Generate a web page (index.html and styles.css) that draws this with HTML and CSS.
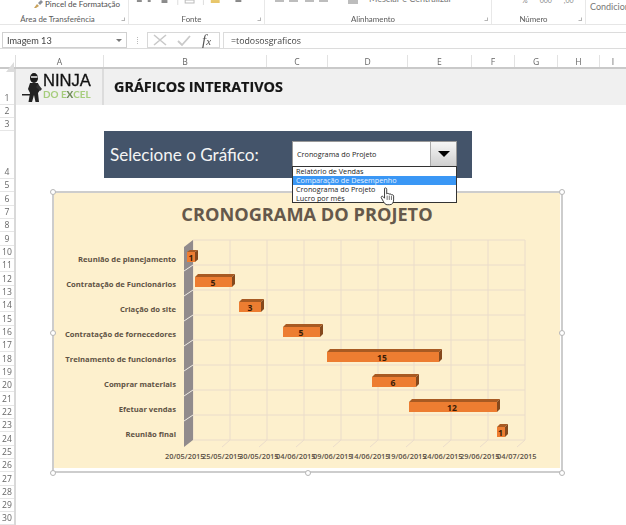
FILE: index.html
```html
<!DOCTYPE html>
<html lang="pt">
<head>
<meta charset="utf-8">
<title>Gráficos Interativos</title>
<link rel="stylesheet" href="styles.css">
</head>
<body>
<div class="app">
  <header class="ribbon">
    <section class="group g1">
      <div class="tools tools-clip">
        <svg class="brush" width="11" height="10" viewBox="0 0 11 10"><path d="M1 9 L4 5 L6 7 L3 9 Z" fill="#c9a25a"/><path d="M5 4 L8 1 L10 3 L7 6 Z" fill="#8a8f98"/></svg>
        <span class="tool-text">Pincel de Formatação</span>
      </div>
      <div class="glabel"><span>Área de Transferência</span><i class="launch"></i></div>
    </section>
    <section class="group g2">
      <div class="tools">
        <svg width="137" height="6" viewBox="0 0 137 6"><g fill="#8b8b8b"><rect x="8" y="0" width="5" height="2"/><rect x="19" y="0" width="3" height="2"/><rect x="33" y="0" width="6" height="3"/></g><rect x="57" y="0" width="9" height="3" fill="none" stroke="#bbb"/><rect x="83" y="0" width="9" height="3" fill="#e8c66a"/><rect x="108" y="0" width="6" height="2" fill="#888"/><rect x="49" y="0" width="1" height="5" fill="#ddd"/><rect x="75" y="0" width="1" height="5" fill="#ddd"/></svg>
      </div>
      <div class="glabel"><span>Fonte</span><i class="launch"></i></div>
    </section>
    <section class="group g3">
      <div class="tools tools-up">
        <svg width="100" height="6" viewBox="0 0 100 6"><g fill="#bdbdbd"><rect x="10" y="0" width="9" height="2"/><rect x="24" y="0" width="9" height="2"/><rect x="40" y="0" width="9" height="2"/><rect x="54" y="0" width="9" height="2"/><rect x="83" y="0" width="10" height="4"/></g></svg>
        <span class="tool-text cut">Mesclar e Centralizar</span>
      </div>
      <div class="glabel"><span>Alinhamento</span><i class="launch"></i></div>
    </section>
    <section class="group g4">
      <div class="tools tools-num"><span class="tool-text">%</span><span class="tool-text">000</span><span class="tool-text">,00</span><span class="tool-text">,0</span></div>
      <div class="glabel"><span>Número</span><i class="launch"></i></div>
    </section>
    <section class="group g5"><span class="cond">Condicion</span></section>
  </header>

  <div class="formula">
    <div class="namebox"><span>Imagem 13</span><i class="caret"></i></div>
    <div class="dots"></div>
    <div class="fxbox">
      <svg width="16" height="14" viewBox="0 0 16 14"><path d="M2 2 L14 12 M14 2 L2 12" stroke="#c9c9c9" stroke-width="1.6" fill="none"/></svg>
      <svg width="16" height="14" viewBox="0 0 16 14"><path d="M2 8 L6 12 L14 3" stroke="#c9c9c9" stroke-width="1.8" fill="none"/></svg>
      <span class="fx">f<sub>x</sub></span>
    </div>
    <div class="input">=todososgraficos</div>
  </div>

  <div class="colhead">
    <div class="corner"><svg width="8" height="10" viewBox="0 0 8 10"><path d="M8 0 V10 H0 Z" fill="#dcdcdc"/></svg></div>
    <div class="col a">A</div><div class="col b">B</div><div class="col c">C</div><div class="col d">D</div><div class="col e">E</div><div class="col f">F</div><div class="col g">G</div><div class="col h">H</div><div class="col i">I</div>
  </div>

  <div class="sheet">
    <div class="rows">
      <div class="row r1">1</div><div class="row">2</div><div class="row">3</div><div class="row r4">4</div>
      <div class="row">5</div><div class="row">6</div><div class="row">7</div><div class="row">8</div><div class="row">9</div><div class="row">10</div>
      <div class="row">11</div><div class="row">12</div><div class="row">13</div><div class="row">14</div><div class="row">15</div><div class="row">16</div>
      <div class="row">17</div><div class="row">18</div><div class="row">19</div><div class="row">20</div><div class="row">21</div><div class="row">22</div>
      <div class="row">23</div><div class="row">24</div><div class="row">25</div><div class="row">26</div><div class="row">27</div><div class="row">28</div>
      <div class="row">29</div><div class="row">30</div>
    </div>
    <div class="cells">
      <div class="headband">
        <div class="logo-cell">
          <svg class="ninja" width="22" height="33" viewBox="0 0 22 33">
            <path d="M0 24 H9 V25.500 H0 Z" fill="#222"/>
            <ellipse cx="12" cy="8" rx="4" ry="5" fill="#1c1c1c"/>
            <rect x="9" y="6" width="6.500" height="2" fill="#bdbdbd"/>
            <path d="M8 13 H16 L18 20 L16 23 L17 32 H13.500 L12 25 L10 32 H6.500 L8 23 L6 19 Z" fill="#222"/>
            <path d="M16 14 L20 19 L18 21 L14 17 Z" fill="#333"/>
          </svg>
          <div class="wordmark">
            <span class="w-ninja">NINJA</span>
            <span class="w-excel">DO E<b>X</b>CEL</span>
          </div>
        </div>
        <div class="title-cell">GRÁFICOS INTERATIVOS</div>
      </div>

      <svg class="chart" width="524" height="294" viewBox="46 185 524 294">
        <rect x="53" y="192" width="509" height="280" fill="#fff" stroke="#bdbdbd" stroke-width="1.5"/>
        <rect x="54" y="193" width="506" height="275" fill="#fdf0cd"/>
        <text class="c-title" x="307" y="221" text-anchor="middle">CRONOGRAMA DO PROJETO</text>

        <g class="grid">
          <path d="M193 240H525M193 265H525M193 290H525M193 315H525M193 340H525M193 365H525M193 390H525M193 415H525M193 440H525"/>
          <path d="M193 240V440M230 240V440M267 240V440M304 240V440M341 240V440M378 240V440M414 240V440M451 240V440M488 240V440M525 240V440"/>
          <path d="M230 440l-8 7M267 440l-8 7M304 440l-8 7M341 440l-8 7M378 440l-8 7M414 440l-8 7M451 440l-8 7M488 440l-8 7M525 440l-8 7"/>
        </g>
        <path d="M184 247 L193 240 V440 L184 447 Z" fill="#918b8c"/>
        <path class="wall" d="M184 271l9-6M184 296l9-6M184 321l9-6M184 346l9-6M184 371l9-6M184 396l9-6M184 421l9-6"/>

        <g class="cats" text-anchor="end">
          <text x="176" y="262.300">Reunião de planejamento</text>
          <text x="176" y="287.300">Contratação de Funcionários</text>
          <text x="176" y="312.300">Criação do site</text>
          <text x="176" y="337.300">Contratação de fornecedores</text>
          <text x="176" y="362.300">Treinamento de funcionários</text>
          <text x="176" y="387.300">Comprar materiais</text>
          <text x="176" y="412.300">Efetuar vendas</text>
          <text x="176" y="437.300">Reunião final</text>
        </g>

        <g class="dates">
          <text x="165" y="458.500">20/05/2015</text>
          <text x="202" y="458.500">25/05/2015</text>
          <text x="239" y="458.500">30/05/2015</text>
          <text x="276" y="458.500">04/06/2015</text>
          <text x="313" y="458.500">09/06/2015</text>
          <text x="350" y="458.500">14/06/2015</text>
          <text x="387" y="458.500">19/06/2015</text>
          <text x="423" y="458.500">24/06/2015</text>
          <text x="460" y="458.500">29/06/2015</text>
          <text x="497" y="458.500">04/07/2015</text>
        </g>

        <g class="bars">
          <g><path class="top" d="M187 252 l3 -2 h8 l-3 2Z"/><path class="side" d="M195 252 l3 -2 v9.500 l-3 2.500Z"/><rect class="front" x="187" y="252" width="8" height="10"/><text x="191" y="260.500">1</text></g>
          <g><path class="top" d="M195 277 l3 -3 h37 l-3 3Z"/><path class="side" d="M232 277 l3 -3 v10 l-3 3Z"/><rect class="front" x="195" y="277" width="37" height="10"/><text x="213" y="285.500">5</text></g>
          <g><path class="top" d="M239 302 l3 -3 h22 l-3 3Z"/><path class="side" d="M261 302 l3 -3 v10 l-3 3Z"/><rect class="front" x="239" y="302" width="22" height="10"/><text x="250" y="310.500">3</text></g>
          <g><path class="top" d="M283 327 l3 -3 h37 l-3 3Z"/><path class="side" d="M320 327 l3 -3 v10 l-3 3Z"/><rect class="front" x="283" y="327" width="37" height="10"/><text x="301" y="335.500">5</text></g>
          <g><path class="top" d="M327 352 l3 -3 h112 l-3 3Z"/><path class="side" d="M439 352 l3 -3 v10 l-3 3Z"/><rect class="front" x="327" y="352" width="112" height="10"/><text x="382" y="360.500">15</text></g>
          <g><path class="top" d="M372 377 l3 -3 h44 l-3 3Z"/><path class="side" d="M416 377 l3 -3 v10 l-3 3Z"/><rect class="front" x="372" y="377" width="44" height="10"/><text x="393" y="385.500">6</text></g>
          <g><path class="top" d="M409 402 l3 -3 h88 l-3 3Z"/><path class="side" d="M497 402 l3 -3 v10 l-3 3Z"/><rect class="front" x="409" y="402" width="88" height="10"/><text x="452" y="410.500">12</text></g>
          <g><path class="top" d="M497 427 l3 -3 h8 l-3 3Z"/><path class="side" d="M505 427 l3 -3 v10 l-3 3Z"/><rect class="front" x="497" y="427" width="8" height="10"/><text x="500.500" y="435.500">1</text></g>
        </g>

        <g class="handles">
          <circle cx="53" cy="192" r="2.500"/><circle cx="308" cy="192" r="2.500"/><circle cx="562" cy="192" r="2.500"/>
          <circle cx="53" cy="333" r="2.500"/><circle cx="562" cy="333" r="2.500"/>
          <circle cx="53" cy="473" r="2.500"/><circle cx="308" cy="473" r="2.500"/><circle cx="562" cy="473" r="2.500"/>
        </g>
      </svg>

      <div class="banner">
        <span class="banner-text">Selecione o Gráfico:</span>
      </div>
      <div class="combo">
        <div class="combo-head">
          <span>Cronograma do Projeto</span>
          <span class="combo-btn"><i class="tri"></i></span>
        </div>
        <ul class="combo-list">
          <li>Relatório de Vendas</li>
          <li class="sel">Comparação de Desempenho</li>
          <li>Cronograma do Projeto</li>
          <li>Lucro por mês</li>
        </ul>
      </div>
      <svg class="cursor" width="16" height="19" viewBox="0 0 18 22">
        <path d="M5 1.500 C6.200 0.500 7.500 1.200 7.500 2.500 V8 C8.500 7 9.800 7.200 10.200 8.400 C11.200 7.600 12.500 8 12.800 9.200 C13.800 8.600 15.400 9 15.500 10.600 V15 C15.500 18 14 20.500 11 20.500 H8 C6 20.500 5 19 3.800 17 L1.200 12.500 C0.600 11 2.400 10 3.400 11.200 L5 13 Z" fill="#fff" stroke="#222" stroke-width="1"/>
        <path d="M8 10 V15 M10.500 10 V15 M13 10.500 V15" stroke="#333" stroke-width=".8"/>
      </svg>
    </div>
  </div>
</div>
</body>
</html>
```
FILE: styles.css
```css
* { box-sizing: border-box; margin: 0; padding: 0; }
html, body { width: 626px; height: 525px; overflow: hidden; background: #fff; }
body { font-family: "Open Sans", "Noto Sans", sans-serif; color: #555; }
.app { width: 626px; height: 525px; display: flex; flex-direction: column; overflow: hidden; filter: blur(.3px); }

/* ribbon */
.ribbon { height: 25px; display: flex; border-bottom: 1px solid #e6e6e6; background: #fff; flex: none; font-family: Lato, sans-serif; }
.group { display: flex; flex-direction: column; justify-content: space-between; border-right: 1px solid #e8e8e8; height: 24px; overflow: hidden; }
.g1 { width: 129px; }
.g2 { width: 136px; }
.g3 { width: 227px; }
.g4 { width: 94px; }
.g5 { flex: 1; border-right: 0; padding: 1px 0 0 4px; }
.tools { height: 9px; display: flex; align-items: flex-start; overflow: hidden; }
.tools-clip { padding-left: 33px; gap: 1px; }
.tool-text { font-size: 8px; line-height: 8px; color: #4e4e4e; white-space: nowrap; }
.brush { flex: none; margin-top: -1px; }
.tool-text.cut { margin: -5px 0 0 4px; font-size: 9px; color: #777; }
.tools-num { gap: 12px; padding-left: 30px; }
.tools-num .tool-text { margin-top: -4px; color: #888; font-size: 7px; }
.glabel { display: flex; justify-content: center; position: relative; height: 11px; padding-right: 10px; font-size: 7.9px; line-height: 12px; color: #5a5a5a; }
.g1 .glabel { padding-right: 13px; }
.launch { position: absolute; right: 3px; top: 4px; width: 4px; height: 4px; border: 1px solid #b5b5b5; border-top-color: transparent; border-left-color: transparent; }
.cond { font-size: 9px; line-height: 11px; color: #777; white-space: nowrap; }

/* formula bar */
.formula { height: 17px; margin-top: 7px; flex: none; display: flex; align-items: stretch; border-bottom: 1px solid #dcdcdc; }
.namebox { width: 125px; margin-left: 2px; border: 1px solid #d0d0d0; display: flex; align-items: center; justify-content: space-between; padding: 0 4px; font-family: Lato, sans-serif; font-size: 9.2px; color: #444; }
.caret { border: 3px solid transparent; border-top-color: #777; border-bottom: 0; }
.dots { width: 20px; position: relative; }
.dots::after { content: ""; position: absolute; left: 10px; top: 5px; height: 7px; border-left: 1px dotted #bbb; }
.fxbox { width: 73px; border: 1px solid #d8d8d8; display: flex; align-items: center; gap: 8px; padding-left: 4px; }
.fx { font-family: "Liberation Serif", serif; font-style: italic; font-size: 15px; line-height: 14px; color: #555; margin-left: 2px; }
.fx sub { font-size: 11px; vertical-align: baseline; }
.input { flex: 1; margin-left: 3px; border-top: 1px solid #dcdcdc; border-left: 1px solid #dcdcdc; padding: 1px 0 0 7px; font-size: 8.8px; line-height: 14px; color: #444; }

/* column header */
.colhead { height: 20px; flex: none; display: flex; align-items: flex-end; border-bottom: 2px solid #c9c9c9; }
.corner { width: 16px; height: 12px; padding-left: 6px; border-right: 1px solid #ddd; }
.col { height: 12px; border-right: 1px solid #e2e2e2; text-align: center; font-size: 8.6px; line-height: 15px; color: #666; flex: none; }
.a { width: 88px; } .b { width: 163px; } .c { width: 61px; } .d { width: 80px; } .e { width: 64px; } .f { width: 43px; } .g { width: 43px; } .h { width: 42px; } .i { flex: 1; border-right: 0; }

/* sheet */
.sheet { flex: 1; display: flex; min-height: 0; }
.rows { width: 16px; flex: none; border-right: 2px solid #d9d9d9; }
.row { height: 13.33px; border-bottom: 1px solid #e6e6e6; font-size: 8.6px; line-height: 11px; color: #666; display: flex; align-items: flex-end; justify-content: center; }
.r1 { height: 35.5px; }
.r4 { height: 47.8px; }
.cells { flex: 1; position: relative; min-width: 0; }

.headband { height: 35.5px; background: #f0f0f0; display: flex; }
.logo-cell { width: 88px; flex: none; border-right: 2px solid #dcdcdc; display: flex; padding-left: 6px; overflow: hidden; }
.ninja { flex: none; margin-top: 1px; }
.wordmark { display: flex; flex-direction: column; margin-left: -1px; }
.w-ninja { font-family: "Liberation Sans", sans-serif; font-size: 16.6px; line-height: 16px; margin-top: 3.500px; color: #111; -webkit-text-stroke: .3px #111; }
.w-excel { font-family: Lato, sans-serif; font-size: 9.9px; line-height: 10px; font-weight: 700; color: #a6cd7c; white-space: nowrap; }
.w-excel b { color: #6f8a58; }
.title-cell { flex: 1; padding-left: 10px; font-size: 14.4px; line-height: 35px; font-weight: 700; color: #151515; -webkit-text-stroke: .2px #151515; }

/* floating objects */
.chart { position: absolute; left: 30px; top: 116px; }
.banner { position: absolute; left: 88px; top: 62px; width: 368px; height: 47px; background: #44546a; display: flex; align-items: center; padding-left: 6px; }
.banner-text { font-family: Lato, sans-serif; font-size: 17.1px; color: #f4f4f4; }
.combo { position: absolute; left: 276px; top: 72px; width: 165px; font-size: 7.25px; color: #1c1c1c; }
.combo-head { height: 26px; background: #fff; border: 1px solid #999; display: flex; justify-content: space-between; align-items: center; padding-left: 4px; }
.combo-btn { width: 26px; height: 24px; background: linear-gradient(#f6f6f6, #cfcfcf); border-left: 1px solid #aaa; display: flex; align-items: center; justify-content: center; }
.tri { border: 6px solid transparent; border-top: 6px solid #000; border-bottom: 0; }
.combo-list { list-style: none; background: #fff; border: 1px solid #333; margin-top: -1px; }
.combo-list li { height: 8.85px; line-height: 9px; padding-left: 3px; white-space: nowrap; }
.combo-list .sel { background: #3a97f5; color: #e8f2ff; }
.cursor { position: absolute; left: 364px; top: 118px; }
.c-title { font-size: 18.2px; font-weight: 700; fill: #65584b; }
.grid path { stroke: #eadccb; stroke-width: 1; fill: none; }
.wall { stroke: #f0ece4; stroke-width: 1; fill: none; }
.cats text { font-size: 7.65px; font-weight: 700; fill: #5f5244; }
.dates text { font-size: 7.4px; font-weight: 600; fill: #5a5046; }
.front { fill: #ed7d31; }
.top { fill: #a85a22; }
.side { fill: #85491d; }
.bars text { font-size: 8.6px; font-weight: 700; fill: #3a1c06; text-anchor: middle; }
.handles circle { fill: #fff; stroke: #b5b5b5; stroke-width: 1; }
```
